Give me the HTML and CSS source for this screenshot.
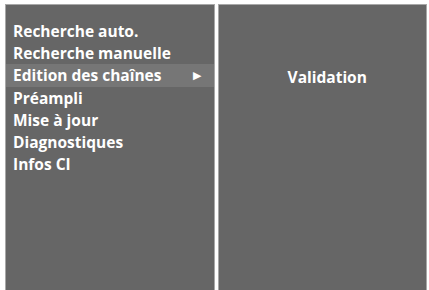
FILE: index.html
```html
<!DOCTYPE html>
<html>
<head>
<meta charset="utf-8">
<link rel="stylesheet" href="styles.css">
</head>
<body>
<div class="screen">
  <div class="panel left">
    <ul class="menu">
      <li>Recherche auto.</li>
      <li>Recherche manuelle</li>
      <li class="active">Edition des chaînes<span class="arrow">&#9654;</span></li>
      <li>Préampli</li>
      <li>Mise à jour</li>
      <li>Diagnostiques</li>
      <li>Infos CI</li>
    </ul>
  </div>
  <div class="panel right">
    <div class="sub">Validation</div>
  </div>
</div>
</body>
</html>
```
FILE: styles.css
```css
html, body {
  margin: 0;
  padding: 0;
  background: #ffffff;
}
body {
  width: 429px;
  height: 290px;
  overflow: hidden;
  font-family: "Open Sans", "DejaVu Sans", sans-serif;
  font-weight: 700;
  color: #ffffff;
}
.screen {
  display: flex;
  gap: 3px;
  padding: 4px 2px 0 5px;
  height: 286px;
}
.panel {
  background: #666666;
  border: 1px solid #a8a8a8;
  border-bottom: none;
  box-sizing: border-box;
  height: 286px;
}
.left {
  width: 210px;
}
.right {
  width: 210px;
}
.menu {
  list-style: none;
  margin: 0;
  padding: 15px 0 0 0;
}
.menu li {
  height: 22.2px;
  line-height: 22px;
  font-size: 15.5px;
  padding-left: 7px;
  padding-right: 12px;
  display: flex;
  justify-content: space-between;
  align-items: center;
}
.menu li.active {
  background: #767676;
}
.arrow {
  font-size: 11px;
}
.sub {
  margin-top: 61px;
  padding-left: 10px;
  height: 22px;
  line-height: 22px;
  font-size: 15.5px;
  text-align: center;
}
```
